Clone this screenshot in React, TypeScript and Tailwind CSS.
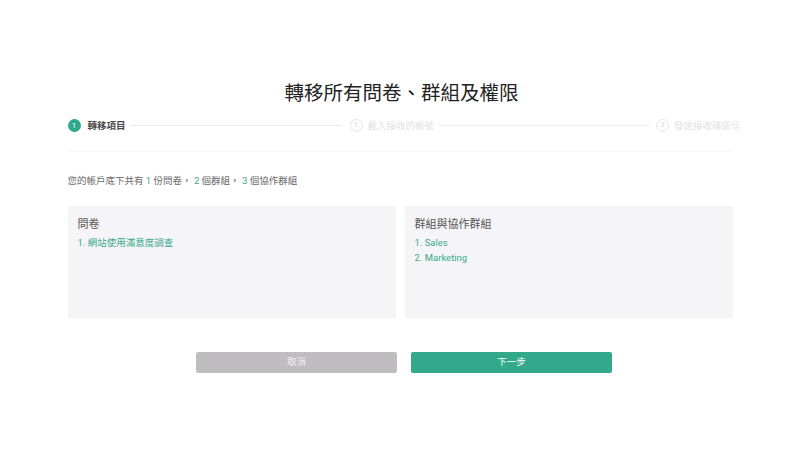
const font = "font-['Roboto','Noto_Sans_CJK_TC',sans-serif]"

function Step({ n, label, active }: { n: number; label: string; active?: boolean }) {
  return (
    <div className="flex shrink-0 items-center whitespace-nowrap">
      {active ? (
        <div className="flex h-[13px] w-[13px] items-center justify-center rounded-full bg-[#2fa88b] text-[8px] leading-none text-white">
          {n}
        </div>
      ) : (
        <div className="flex h-[13px] w-[13px] items-center justify-center rounded-full border border-[#e6e5e8] text-[7px] leading-none text-[#dcdbde]">
          {n}
        </div>
      )}
      <span
        className={
          active
            ? "ml-[7px] text-[9.5px] font-bold leading-none text-[#4a4a4a]"
            : "ml-[5px] text-[9.5px] leading-none text-[#e2e1e4]"
        }
      >
        {label}
      </span>
    </div>
  )
}

export default function App() {
  return (
    <div className={`min-h-[449px] w-full bg-white ${font}`}>
      <div className="mx-auto w-[665px] pt-[80px]">
        <h1 className="ml-[3px] text-center text-[19.5px] leading-[28px] text-[#222]">轉移所有問卷、群組及權限</h1>

        <div className="mt-[11px] flex items-center border-b border-[#f8f7f9] pb-[19px]">
          <Step n={1} label="轉移項目" active />
          <div className="ml-[5px] mr-[9px] h-px w-[210px] shrink-0 bg-[#e9e8eb]" />
          <Step n={2} label="載入接收的帳號" />
          <div className="ml-[5px] mr-[7px] h-px w-[210px] shrink-0 bg-[#eeedf0]" />
          <Step n={3} label="發送接收確認信" />
        </div>

        <p className="mt-[22px] text-[9.5px] leading-[14px] text-[#6a6a6a]">
          您的帳戶底下共有 <span className="text-[#3aa98e]">1</span> 份問卷，{" "}
          <span className="text-[#3aa98e]">2</span> 個群組，{" "}
          <span className="text-[#3aa98e]">3</span> 個協作群組
        </p>

        <div className="mt-[18px] grid grid-cols-2 gap-[9px]">
          <div className="h-[112px] bg-[#f5f4f7] px-[10px] pt-[11px]">
            <h2 className="text-[11px] leading-[16px] text-[#555]">問卷</h2>
            <ul className="mt-[2px] text-[9.5px] leading-[15px] text-[#3aa98e]">
              <li>1. 網站使用滿意度調查</li>
            </ul>
          </div>
          <div className="h-[112px] bg-[#f5f4f7] px-[10px] pt-[11px]">
            <h2 className="text-[11px] leading-[16px] text-[#555]">群組與協作群組</h2>
            <ul className="mt-[2px] text-[9.5px] leading-[15px] text-[#3aa98e]">
              <li>1. Sales</li>
              <li>2. Marketing</li>
            </ul>
          </div>
        </div>

        <div className="ml-[8px] mt-[34px] flex justify-center gap-[14px]">
          <button className="h-[21px] w-[201px] rounded-[2px] bg-[#bfbdc0] text-[9.5px] text-[#eeeeee]">
            取消
          </button>
          <button className="h-[21px] w-[201px] rounded-[2px] bg-[#33a98c] text-[9.5px] text-white">
            下一步
          </button>
        </div>
      </div>
    </div>
  )
}
